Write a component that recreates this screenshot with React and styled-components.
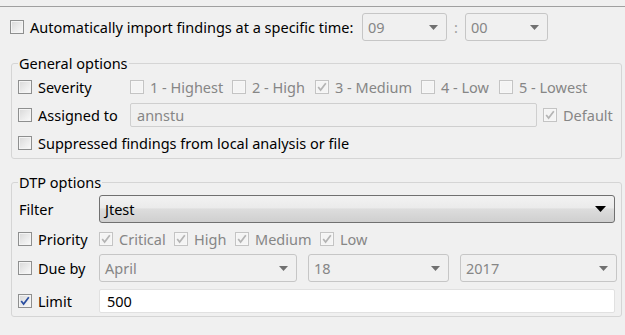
import React from "react";
import styled, { createGlobalStyle } from "styled-components";

const GlobalStyle = createGlobalStyle`
  html, body {
    margin: 0;
    padding: 0;
    background: #f0f0f0;
  }
  body {
    font-family: "Noto Sans", "Open Sans", sans-serif;
    font-size: 14.5px;
    color: #000;
  }
`;

const Page = styled.div`
  width: 625px;
  height: 335px;
  padding-top: 6px;
  box-sizing: border-box;
  overflow: hidden;
`;

const Separator = styled.div`
  height: 1px;
  background: #a0a0a0;
`;

const TopRow = styled.div`
  display: flex;
  align-items: center;
  height: 28px;
  margin-top: 6px;
  padding-left: 10px;
`;

const TopLabel = styled.div`
  width: 352px;
  display: flex;
  align-items: center;
`;

const Colon = styled.span`
  width: 18px;
  text-align: center;
  color: #a0a0a0;
`;

const Group = styled.fieldset`
  margin: ${(p) => p.$top}px 3px 0 11px;
  padding: ${(p) => p.$pt}px 7px ${(p) => p.$pb}px 6px;
  border: 1px solid #d5d5d5;
  border-radius: 3px;
  min-width: 0;
`;

const Legend = styled.legend`
  padding: 0 1px;
  line-height: 18px;
  height: 18px;
`;

const Row = styled.div`
  display: flex;
  align-items: center;
  height: ${(p) => p.$h || 28}px;
  margin-top: ${(p) => p.$mt || 0}px;
`;

const LabelCell = styled.div`
  width: ${(p) => p.$w}px;
  flex-shrink: 0;
  display: flex;
  align-items: center;
  padding-left: ${(p) => p.$pl || 0}px;
  box-sizing: border-box;
`;

const CheckLabel = styled.label`
  display: flex;
  align-items: center;
  gap: 6px;
  width: ${(p) => (p.$w ? `${p.$w}px` : "auto")};
  flex-shrink: 0;
  color: ${(p) => (p.$disabled ? "#868686" : "#000")};
  white-space: nowrap;
`;

const Box = styled.span`
  width: 14px;
  height: 14px;
  box-sizing: border-box;
  flex-shrink: 0;
  display: flex;
  align-items: center;
  justify-content: center;
  border: 1px solid ${(p) => (p.$disabled ? "#c4c4c4" : "#8e8f8f")};
  background: ${(p) =>
    p.$disabled
      ? "#f4f4f4"
      : "linear-gradient(135deg, #d8d8d8 0%, #ededed 60%, #fafafa 100%)"};
  box-shadow: inset 0 0 0 1px ${(p) => (p.$disabled ? "#f7f7f7" : "#f4f4f4")};
`;

const Combo = styled.div`
  width: ${(p) => p.$w}px;
  height: 28px;
  box-sizing: border-box;
  flex-shrink: 0;
  display: flex;
  align-items: center;
  justify-content: space-between;
  padding: 0 8px 0 5px;
  border-radius: 3px;
  border: 1px solid ${(p) => (p.$active ? "#707070" : "#c6c6c6")};
  background: ${(p) =>
    p.$active
      ? "linear-gradient(#f2f2f2 0%, #ebebeb 45%, #dddddd 50%, #cfcfcf 100%)"
      : "#f0f0f0"};
  color: ${(p) => (p.$active ? "#000" : "#868686")};
  margin-left: ${(p) => p.$ml || 0}px;
`;

const TextField = styled.div`
  width: ${(p) => p.$w}px;
  height: 24px;
  box-sizing: border-box;
  flex-shrink: 0;
  display: flex;
  align-items: center;
  padding-left: ${(p) => (p.$disabled ? 6 : 7)}px;
  border: 1px solid ${(p) => (p.$disabled ? "#cfcfcf" : "#e1e1e1")};
  border-radius: 2px;
  background: ${(p) => (p.$disabled ? "#f0f0f0" : "#fff")};
  color: ${(p) => (p.$disabled ? "#868686" : "#000")};
`;

const Options = styled.div`
  display: flex;
  align-items: center;
`;

const Check = ({ checked, disabled }) => (
  <Box $disabled={disabled}>
    {checked && (
      <svg width="10" height="10" viewBox="0 0 10 10">
        <path
          d="M1.2 5 L3.6 8 L8.8 1.2"
          fill="none"
          stroke={disabled ? "#b4b4b4" : "#2a4ea0"}
          strokeWidth="1.7"
        />
      </svg>
    )}
  </Box>
);

const Arrow = ({ dark }) =>
  dark ? (
    <svg width="11" height="6" viewBox="0 0 11 6">
      <path d="M0 0 H11 L5.5 6 Z" fill="#000" />
    </svg>
  ) : (
    <svg width="9" height="5" viewBox="0 0 9 5">
      <path d="M0 0 H9 L4.5 5 Z" fill="#707070" />
    </svg>
  );

const Option = ({ label, checked, disabled, w }) => (
  <CheckLabel $disabled={disabled} $w={w}>
    <Check checked={checked} disabled={disabled} />
    {label}
  </CheckLabel>
);

const severities = [
  { label: "1 - Highest", w: 102 },
  { label: "2 - High", w: 83 },
  { label: "3 - Medium", w: 106, checked: true },
  { label: "4 - Low", w: 78 },
  { label: "5 - Lowest" },
];

const priorities = [
  { label: "Critical", w: 75 },
  { label: "High", w: 61 },
  { label: "Medium", w: 85 },
  { label: "Low" },
];

export default function App() {
  return (
    <Page>
      <GlobalStyle />
      <Separator />
      <TopRow>
        <TopLabel>
          <Option label="Automatically import findings at a specific time:" />
        </TopLabel>
        <Combo $w={85}>
          09
          <Arrow />
        </Combo>
        <Colon>:</Colon>
        <Combo $w={83}>
          00
          <Arrow />
        </Combo>
      </TopRow>

      <Group $top={13} $pt={1} $pb={1}>
        <Legend>General options</Legend>
        <Row>
          <LabelCell $w={112}>
            <Option label="Severity" />
          </LabelCell>
          <Options>
            {severities.map((s) => (
              <Option key={s.label} {...s} disabled />
            ))}
          </Options>
        </Row>
        <Row>
          <LabelCell $w={112}>
            <Option label="Assigned to" />
          </LabelCell>
          <TextField $w={407} $disabled>
            annstu
          </TextField>
          <LabelCell $w={80} $pl={6}>
            <Option label="Default" checked disabled />
          </LabelCell>
        </Row>
        <Row>
          <Option label="Suppressed findings from local analysis or file" />
        </Row>
      </Group>

      <Group $top={14} $pt={4} $pb={1}>
        <Legend>DTP options</Legend>
        <Row>
          <LabelCell $w={81} $pl={1}>
            Filter
          </LabelCell>
          <Combo $w={516} $active>
            Jtest
            <Arrow dark />
          </Combo>
        </Row>
        <Row $h={30} $mt={1}>
          <LabelCell $w={81}>
            <Option label="Priority" />
          </LabelCell>
          <Options>
            {priorities.map((p) => (
              <Option key={p.label} {...p} checked disabled />
            ))}
          </Options>
        </Row>
        <Row>
          <LabelCell $w={81}>
            <Option label="Due by" />
          </LabelCell>
          <Combo $w={198}>
            April
            <Arrow />
          </Combo>
          <Combo $w={141} $ml={11}>
            18
            <Arrow />
          </Combo>
          <Combo $w={157} $ml={11}>
            2017
            <Arrow />
          </Combo>
        </Row>
        <Row $mt={5}>
          <LabelCell $w={81}>
            <Option label="Limit" checked />
          </LabelCell>
          <TextField $w={516}>500</TextField>
        </Row>
      </Group>
    </Page>
  );
}
